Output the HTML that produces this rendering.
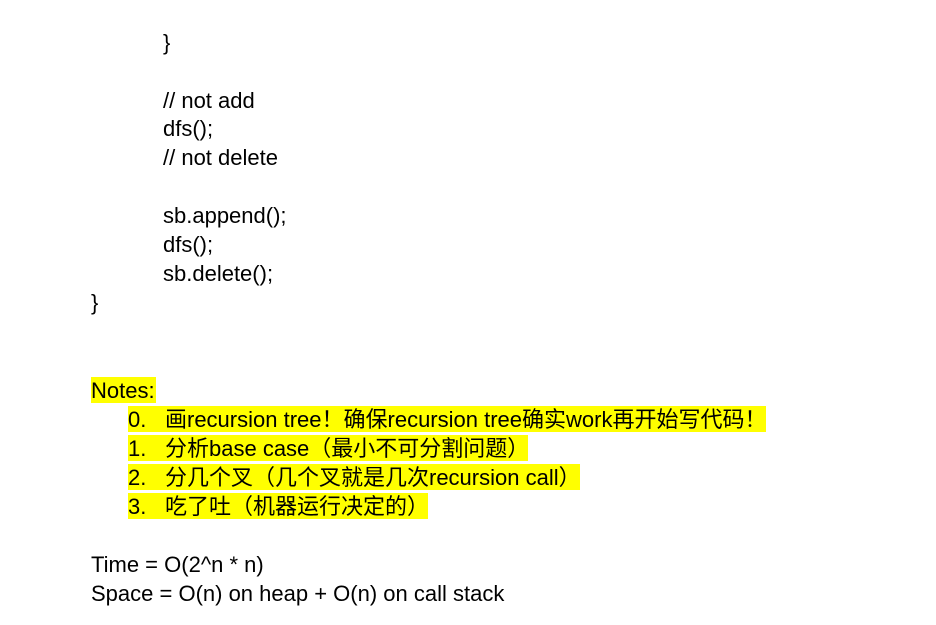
<!DOCTYPE html>
<html><head><meta charset="utf-8"><style>
body{margin:0;width:936px;height:625px;background:#fff;position:relative;overflow:hidden;font-family:"Liberation Sans","Noto Sans CJK SC",sans-serif;font-size:22px;color:#000}
.l{position:absolute;white-space:nowrap;line-height:26px;height:26px}
.h{background:#ffff00}
.n{position:absolute;left:0;top:1px}
.t{position:absolute;left:37px;top:1px}
.p{position:relative;top:1px}
</style></head><body>
<div class="l" style="left:163px;top:30px">}</div>
<div class="l" style="left:163px;top:88px">// not add</div>
<div class="l" style="left:163px;top:116px">dfs();</div>
<div class="l" style="left:163px;top:145px">// not delete</div>
<div class="l" style="left:163px;top:203px">sb.append();</div>
<div class="l" style="left:163px;top:232px">dfs();</div>
<div class="l" style="left:163px;top:261px">sb.delete();</div>
<div class="l" style="left:91px;top:290px">}</div>
<div class="l h" style="left:91px;top:377px;width:65px"><span class="p">Notes:</span></div>
<div class="l h" style="left:128px;top:406px;width:638px"><span class="n">0.</span><span class="t">画recursion tree！确保recursion tree确实work再开始写代码！</span></div>
<div class="l h" style="left:128px;top:435px;width:400px"><span class="n">1.</span><span class="t">分析base case（最小不可分割问题）</span></div>
<div class="l h" style="left:128px;top:464px;width:452px"><span class="n">2.</span><span class="t">分几个叉（几个叉就是几次recursion call）</span></div>
<div class="l h" style="left:128px;top:493px;width:300px"><span class="n">3.</span><span class="t">吃了吐（机器运行决定的）</span></div>
<div class="l" style="left:91px;top:552px">Time = O(2^n * n)</div>
<div class="l" style="left:91px;top:581px">Space = O(n) on heap + O(n) on call stack</div>
</body></html>
